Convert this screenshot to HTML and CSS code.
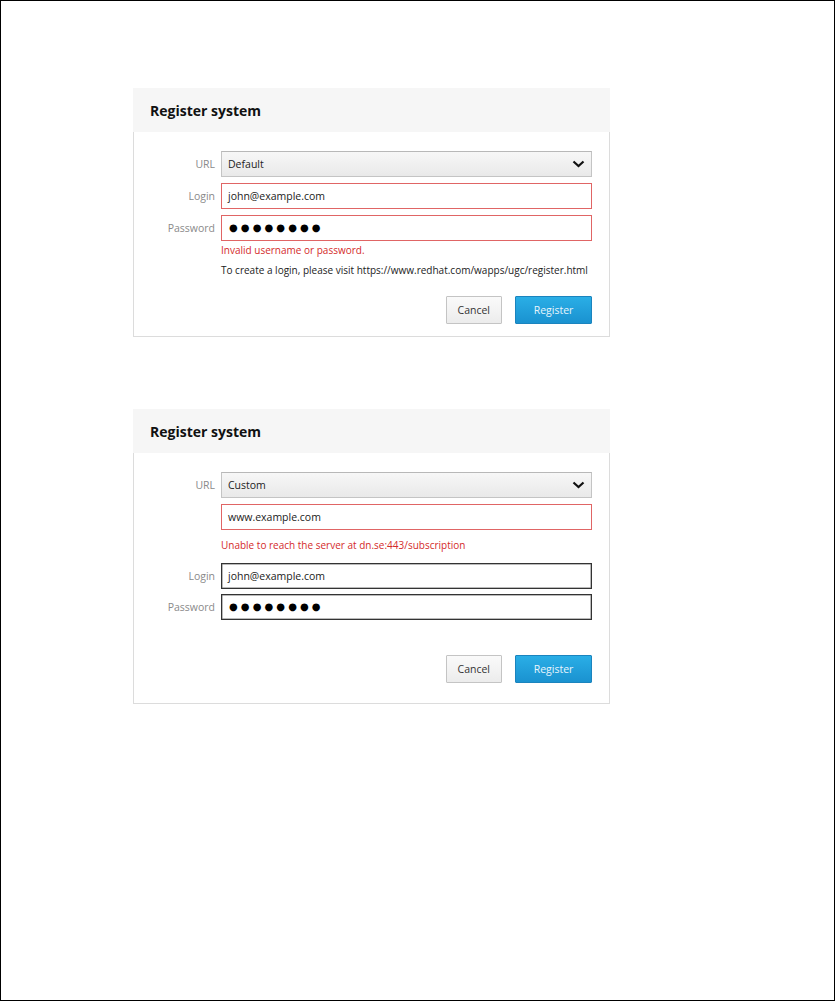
FILE: index.html
```html
<!DOCTYPE html>
<html>
<head>
<meta charset="utf-8">
<link rel="stylesheet" href="styles.css">
</head>
<body>
<div class="page">
  <section class="card">
    <header class="card-head"><h2>Register system</h2></header>
    <div class="card-body">
      <div class="form">
        <label class="lbl">URL</label>
        <div class="select"><span>Default</span>
          <svg class="chev" width="13" height="8" viewBox="0 0 13 8"><polyline points="1.5,1.5 6.5,6 11.5,1.5" fill="none" stroke="#111" stroke-width="2.2"/></svg>
        </div>
        <label class="lbl">Login</label>
        <div class="input err">john@example.com</div>
        <label class="lbl">Password</label>
        <div class="field">
          <div class="input err pw">●●●●●●●●</div>
          <div class="msg-err">Invalid username or password.</div>
          <div class="msg-info">To create a login, please visit https://www.redhat.com/wapps/ugc/register.html</div>
        </div>
      </div>
      <div class="actions"><button class="btn">Cancel</button><button class="btn primary">Register</button></div>
    </div>
  </section>

  <section class="card">
    <header class="card-head"><h2>Register system</h2></header>
    <div class="card-body b2">
      <div class="form f2">
        <label class="lbl">URL</label>
        <div class="field">
          <div class="select"><span>Custom</span>
            <svg class="chev" width="13" height="8" viewBox="0 0 13 8"><polyline points="1.5,1.5 6.5,6 11.5,1.5" fill="none" stroke="#111" stroke-width="2.2"/></svg>
          </div>
          <div class="input err gap-top">www.example.com</div>
          <div class="msg-err big">Unable to reach the server at dn.se:443/subscription</div>
        </div>
        <label class="lbl">Login</label>
        <div class="input dark">john@example.com</div>
        <label class="lbl">Password</label>
        <div class="input dark pw">●●●●●●●●</div>
      </div>
      <div class="actions a2"><button class="btn">Cancel</button><button class="btn primary">Register</button></div>
    </div>
  </section>
</div>
</body>
</html>
```
FILE: styles.css
```css
* { box-sizing: border-box; }
html, body { margin: 0; padding: 0; }
body {
  font-family: "Open Sans", "Liberation Sans", sans-serif;
  background: #fff;
  color: #333;
}
.page {
  width: 835px;
  height: 1001px;
  border: 1px solid #000;
  padding: 87px 0 0 132px;
}
.card {
  width: 477px;
  margin-bottom: 72px;
}
.card-head {
  background: #f6f6f6;
  height: 44px;
  padding: 1px 17px 0;
  display: flex;
  align-items: center;
}
.card-head h2 {
  margin: 0;
  font-size: 14px;
  font-weight: 700;
  color: #111;
}
.card-body {
  border: 1px solid #dcdcdc;
  border-top: none;
  padding: 19px 17px 12px 0;
}
.card-body.b2 { padding-bottom: 20px; }
.form {
  display: grid;
  grid-template-columns: 87px 1fr;
  column-gap: 0;
  row-gap: 6px;
  align-items: start;
}
.form.f2 { row-gap: 5px; }
.lbl {
  font-size: 10.5px;
  color: #8a8a8a;
  text-align: right;
  padding-right: 6px;
  line-height: 26px;
  height: 26px;
}
.select {
  height: 26px;
  border: 1px solid #c4c4c4;
  border-top-color: #b8b8b8;
  background: linear-gradient(#f7f7f7, #e9e9e9);
  display: flex;
  align-items: center;
  justify-content: space-between;
  padding: 0 6px 0 6px;
  font-size: 10.5px;
  color: #222;
}
.chev { display: block; }
.input {
  height: 26px;
  border: 1px solid #ccc;
  background: #fff;
  padding: 0 6px;
  font-size: 10.5px;
  line-height: 24px;
  color: #222;
}
.input.err { border-color: #e06565; }
.input.dark { border: 1px solid #333; box-shadow: inset 0 0 0 0.5px #777; }
.input.pw {
  font-family: "DejaVu Sans", sans-serif;
  font-size: 10px;
  letter-spacing: 3.1px;
  color: #000;
  padding-left: 7px;
}
.gap-top { margin-top: 6px; }
.msg-err {
  color: #d42a2a;
  font-size: 10px;
  margin-top: 2px;
  line-height: 14px;
}
.msg-err.big { margin-top: 8px; margin-bottom: 6px; }
.msg-info {
  color: #222;
  font-size: 10px;
  margin-top: 6px;
  line-height: 14px;
}
.actions {
  display: flex;
  justify-content: flex-end;
  gap: 13px;
  margin-top: 19px;
}
.actions.a2 { margin-top: 35px; }
.btn {
  font-family: "Open Sans", "Liberation Sans", sans-serif;
  font-size: 10.5px;
  height: 28px;
  padding: 0 11px;
  border: 1px solid #c4c4c4;
  background: linear-gradient(#fafafa, #ececec);
  color: #333;
  border-radius: 1px;
}
.btn.primary {
  width: 77px;
  border-color: #1b84be;
  background: linear-gradient(#2aaee6, #1a92d0);
  color: #e8f5fc;
}
```
